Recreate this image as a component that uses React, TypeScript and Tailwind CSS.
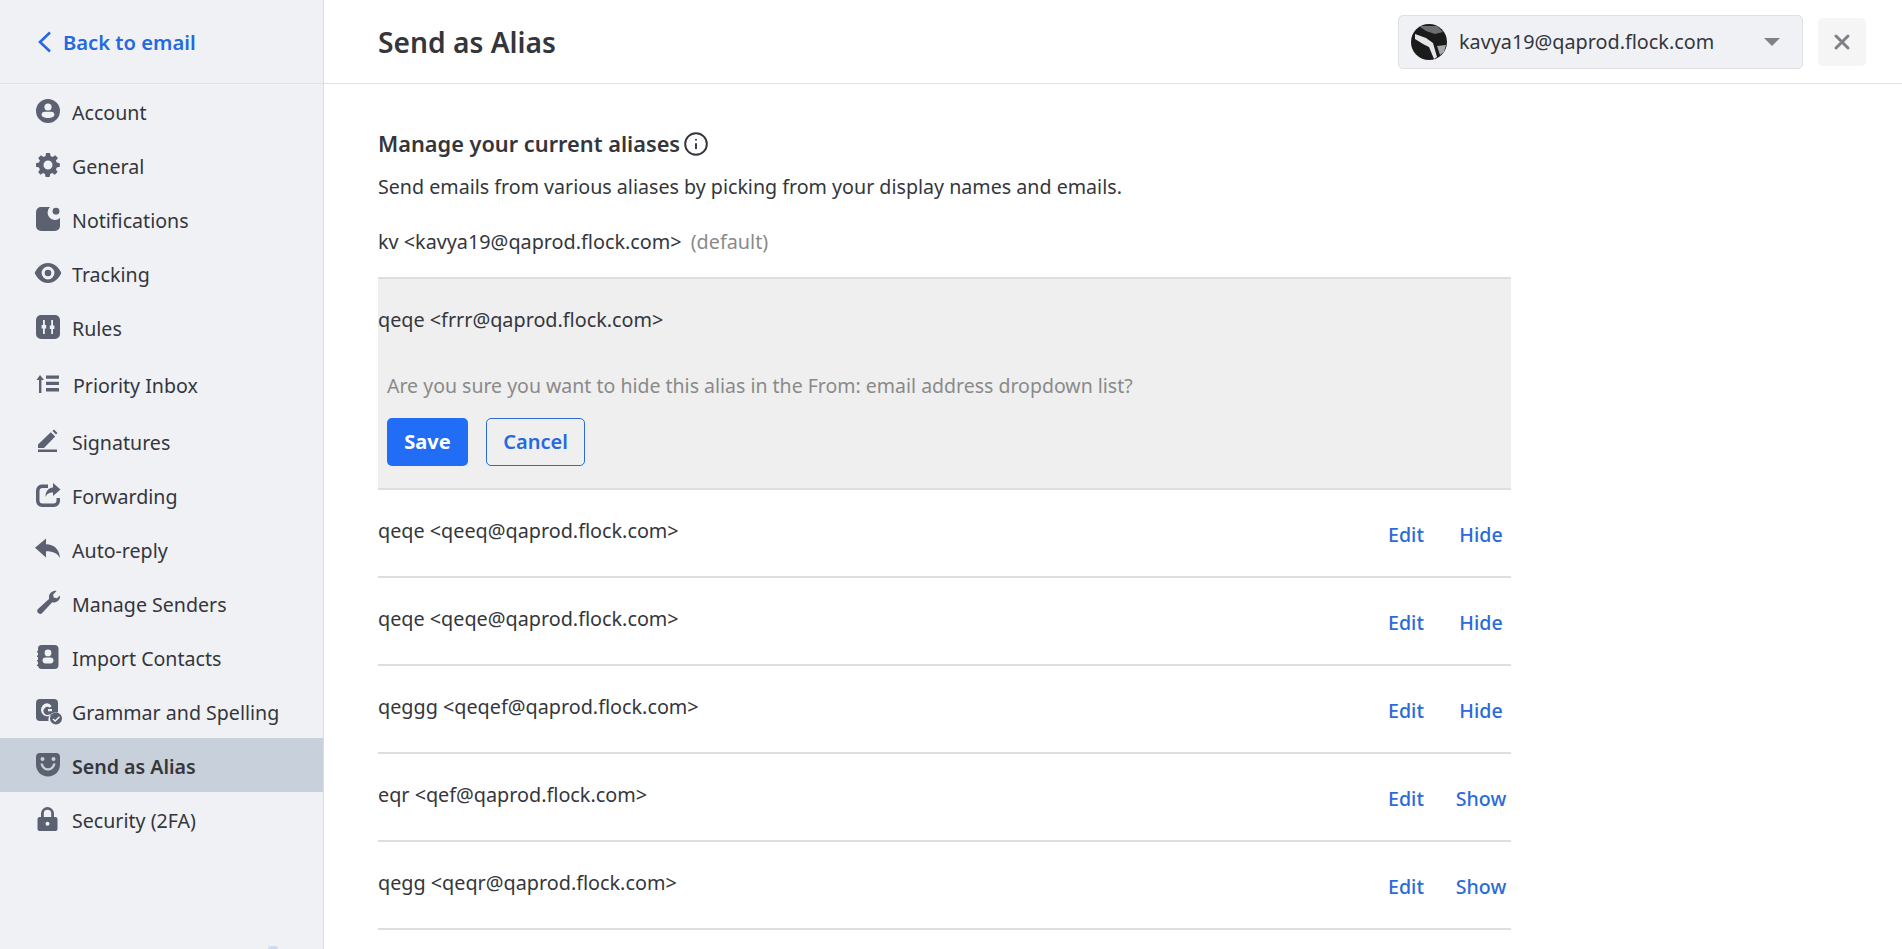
import { Info, X } from "lucide-react";
import type { ReactNode } from "react";

const FONT = "font-['Noto_Sans','Open_Sans',sans-serif]";

// Settings nav icons, all drawn on a 24 box in the slate of the sidebar.
const icons: Record<string, ReactNode> = {
  account: (
    <path
      fillRule="evenodd"
      d="M12 0a12 12 0 1 1 0 24 12 12 0 0 1 0-24Zm0 4.400a3.600 3.600 0 1 0 0 7.200 3.600 3.600 0 0 0 0-7.200Zm-3.400 8.400c-1.700 0-3 1.300-3 2.900 0 1.900 2.800 3.300 6.400 3.300s6.400-1.400 6.400-3.300c0-1.600-1.300-2.900-3-2.900Z"
    />
  ),
  general: (
    <path
      fillRule="evenodd"
      d="M10 0h4l.6 3 2 .9 2.600-1.700 2.800 2.800L19.900 7.600l.9 2 3 .6v3.600l-3 .6-.9 2 1.700 2.600-2.800 2.800-2.600-1.700-2 .9-.6 3h-4l-.6-3-2-.9-2.600 1.700L2.200 19l1.700-2.600-.9-2-3-.6v-3.600l3-.6.9-2L2.200 5 5 2.200l2.600 1.700 2-.9ZM12 7.500a4.500 4.500 0 1 0 0 9 4.500 4.500 0 0 0 0-9Z"
    />
  ),
  notifications: (
    <>
      <path d="M5 0h9a6 6 0 0 0 10 11v8a5 5 0 0 1-5 5H5a5 5 0 0 1-5-5V5a5 5 0 0 1 5-5Z" />
      <circle cx="20" cy="4.200" r="3.400" />
    </>
  ),
  tracking: (
    <path
      fillRule="evenodd"
      d="M12 2c6.400 0 11 4.800 13.300 10-2.300 5.200-6.900 10-13.300 10S1 17.200-1.300 12C1 6.800 5.600 2 12 2Zm0 3.600a6.400 6.400 0 1 0 0 12.800 6.400 6.400 0 0 0 0-12.800Zm0 3.100a3.300 3.300 0 1 1 0 6.600 3.300 3.300 0 0 1 0-6.600Z"
    />
  ),
  rules: (
    <path
      fillRule="evenodd"
      d="M5 0h14a5 5 0 0 1 5 5v14a5 5 0 0 1-5 5H5a5 5 0 0 1-5-5V5a5 5 0 0 1 5-5Zm2 5v5H5.600v3.500H7V19h1.800v-5.500h1.400V10H8.800V5Zm8.200 0v5.500h-1.400V14h1.400v5H17v-5h1.400v-3.500H17V5Z"
    />
  ),
  priority: (
    <path d="M4 3 .5 8H3v13h2.400V8H8ZM10 3.500h13v3.200H10Zm0 6.300h13v3.200H10Zm0 6.300h13v3.400H10Z" />
  ),
  signatures: (
    <path d="M18 .5 21.500 4 20 5.500 16.500 2ZM14.800 3.200 19.200 7.600 8 19H2v-3.500ZM2 20.500h19V23H2Z" />
  ),
  forwarding: (
    <path d="M5.500 1.500H12v3.600H6.500a3 3 0 0 0-3 3v9.400a3 3 0 0 0 3 3h11a3 3 0 0 0 3-3V15H24v3a6 6 0 0 1-6 6H6a6 6 0 0 1-6-6V7.500a6 6 0 0 1 5.500-6ZM17 0l7.500 6.500L17 13V9.500c-3.500 0-6 1-7.500 4.500 0-5.500 2.500-9 7.500-9.500Z" />
  ),
  reply: (
    <path d="M10 1.500V7.200c8 .3 13.300 4.500 14 13.800-2.500-4.700-6.500-6.800-14-6.800v6.300L-1 10.800Z" />
  ),
  senders: (
    <path d="M24 4.500c.6 3.800-2.800 8-7.800 6.700L6.200 22a2.700 2.700 0 0 1-4.200-.2 2.700 2.700 0 0 1 .3-4.100L13.200 7.800C11.900 3.100 16.200-1 20.600 0l-3.500 3.500.6 3.100 3.100.7Z" />
  ),
  contacts: (
    <path
      fillRule="evenodd"
      d="M5.500 0h13a4 4 0 0 1 4 4v16a4 4 0 0 1-4 4h-13a3.500 3.500 0 0 1-3.400-3H1v-1.500h1v-3H1V15h1v-3H1v-1.500h1v-3H1V6h1V3.500A3.500 3.500 0 0 1 5.500 0Zm6.500 4.500a3.400 3.400 0 1 0 0 6.800 3.400 3.400 0 0 0 0-6.800ZM9.500 12.500c-1.800 0-3 1.200-3 2.800 0 1.700 1.100 3.200 2.900 3.200h5.200c1.800 0 2.900-1.500 2.900-3.200 0-1.600-1.200-2.800-3-2.800Z"
    />
  ),
  grammar: (
    <>
      <path
        fillRule="evenodd"
        d="M4 0h14a4 4 0 0 1 4 4v9.500a7.500 7.500 0 0 0-9.500 8.500H4a4 4 0 0 1-4-4V4a4 4 0 0 1 4-4Zm7.500 4.300a6.500 6.500 0 1 0 4.700 11h-2.500a4 4 0 1 1 .2-6.600l1.700-1.700a6.500 6.500 0 0 0-4.100-2.700Zm.5 5.700v2.300h4v-2.300Z"
      />
      <path
        fillRule="evenodd"
        d="M20 13.500a6 6 0 1 1 0 12 6 6 0 0 1 0-12Zm3 3.800-3.800 3.600-1.700-1.500-1 1 2.700 2.500 4.800-4.600Z"
      />
    </>
  ),
  alias: (
    <path
      fillRule="evenodd"
      d="M4 0h16a4 4 0 0 1 4 4v7.500C24 18.500 18.500 23.500 12 23.500S0 18.500 0 11.500V4a4 4 0 0 1 4-4Zm2.500 4a2 2 0 1 0 0 4 2 2 0 0 0 0-4Zm11 0a2 2 0 1 0 0 4 2 2 0 0 0 0-4ZM4.500 10.500c.6 4.300 3.700 7 7.500 7s6.900-2.700 7.500-7h-2.400c-.5 3-2.500 4.700-5.100 4.700S7.400 13.500 6.900 10.500Z"
    />
  ),
  security: (
    <path
      fillRule="evenodd"
      d="M11.500 0A6.500 6.500 0 0 1 18 6.500V10h1.500a2 2 0 0 1 2 2v10a2 2 0 0 1-2 2h-16a2 2 0 0 1-2-2V12a2 2 0 0 1 2-2H5V6.500A6.500 6.500 0 0 1 11.500 0Zm0 2.800a3.700 3.700 0 0 0-3.700 3.700V10h7.400V6.500a3.700 3.700 0 0 0-3.700-3.700Zm0 12a2 2 0 1 0 0 4 2 2 0 0 0 0-4Z"
    />
  ),
};

type NavItem = { label: string; icon: string; tall?: boolean; active?: boolean };

const nav: NavItem[] = [
  { label: "Account", icon: "account" },
  { label: "General", icon: "general" },
  { label: "Notifications", icon: "notifications" },
  { label: "Tracking", icon: "tracking" },
  { label: "Rules", icon: "rules" },
  { label: "Priority Inbox", icon: "priority", tall: true },
  { label: "Signatures", icon: "signatures" },
  { label: "Forwarding", icon: "forwarding" },
  { label: "Auto-reply", icon: "reply" },
  { label: "Manage Senders", icon: "senders" },
  { label: "Import Contacts", icon: "contacts" },
  { label: "Grammar and Spelling", icon: "grammar" },
  { label: "Send as Alias", icon: "alias", active: true },
  { label: "Security (2FA)", icon: "security" },
];

const aliases = [
  { text: "qeqe <qeeq@qaprod.flock.com>", action: "Hide" },
  { text: "qeqe <qeqe@qaprod.flock.com>", action: "Hide" },
  { text: "qeggg <qeqef@qaprod.flock.com>", action: "Hide" },
  { text: "eqr <qef@qaprod.flock.com>", action: "Show" },
  { text: "qegg <qeqr@qaprod.flock.com>", action: "Show" },
];

function Sidebar() {
  return (
    <aside className="relative flex w-[324px] shrink-0 flex-col border-r border-[#dcdde1] bg-[#f0f1f5]">
      <div className="flex h-[84px] items-center gap-[12px] border-b border-[#e0e1e4] pl-[38px]">
        <svg viewBox="0 0 13 22" className="h-[22px] w-[13px] fill-none stroke-[#2569e0] stroke-[2.600]">
          <path d="M12 1.500 2 11l10 9.500" />
        </svg>
        <span className="pt-[2px] text-[20.2px] font-semibold text-[#2569e0]">Back to email</span>
      </div>
      <nav>
        {nav.map((item) => (
          <div
            key={item.label}
            className={`flex items-center pl-[36px] text-[19.6px] ${item.tall ? "h-[60px]" : "h-[54px]"} ${
              item.active ? "bg-[#c7d0db] font-semibold" : ""
            } text-[#34363c]`}
          >
            <svg viewBox="0 0 24 24" className="h-[24px] w-[24px] shrink-0 overflow-visible fill-[#5b6170]">
              {icons[item.icon]}
            </svg>
            <span className={`pt-[3px] ${item.tall ? "ml-[13px]" : "ml-[12px]"}`}>{item.label}</span>
          </div>
        ))}
      </nav>
      <div className="absolute bottom-0 left-[268px] h-[3px] w-[10px] rounded-t-sm bg-[#cddcf3]" />
    </aside>
  );
}

function AliasRow({ text, action }: { text: string; action: string }) {
  return (
    <div className="flex h-[88px] justify-between border-b-2 border-[#dedede] pt-[26px]">
      <span className="text-[19.8px] text-[#34363c]">{text}</span>
      <div className="mt-[4px] flex h-fit gap-[15px] text-[19.6px] font-medium text-[#2a6bd8]">
        <span className="w-[60px] text-center">Edit</span>
        <span className="w-[60px] text-center">{action}</span>
      </div>
    </div>
  );
}

export default function App() {
  return (
    <div className={`flex h-[949px] w-[1902px] overflow-hidden bg-white ${FONT}`}>
      <Sidebar />
      <main className="min-w-0 flex-1">
        <header className="flex h-[84px] items-center justify-between border-b border-[#e0e1e4] pl-[54px] pr-[36px]">
          <h1 className="pt-[2px] text-[28.2px] font-semibold text-[#34363c]">Send as Alias</h1>
          <div className="flex items-center gap-[15px]">
            <div className="flex h-[54px] w-[405px] items-center rounded-[5px] border border-[#dfe0e4] bg-[#f0f1f5] pl-[12px] pr-[22px]">
              <svg viewBox="0 0 36 36" className="h-[36px] w-[36px] shrink-0">
                <circle cx="18" cy="18" r="18" fill="#1b1b1b" />
                <path d="M8 2h18l6 6-8 2-9-3Z" fill="#6e6e6e" />
                <path d="M4 10 15 14l7 5 4 14-3 2-5-12-6-3-8-5Z" fill="#e6e6e6" />
                <path d="M26 22l9-1-2 7-4 3Z" fill="#a8a8a8" />
              </svg>
              <span className="ml-[12px] flex-1 text-[19.8px] text-[#34363c]">kavya19@qaprod.flock.com</span>
              <div className="h-0 w-0 border-x-[8px] border-t-[8px] border-x-transparent border-t-[#808186]" />
            </div>
            <button className="flex h-[48px] w-[48px] items-center justify-center rounded-[5px] bg-[#f5f5f6]">
              <X className="h-[24px] w-[24px] text-[#808186]" strokeWidth={3} />
            </button>
          </div>
        </header>
        <section className="ml-[54px] w-[1133px] pt-[44px]">
          <div className="flex items-center gap-[3px]">
            <h2 className="text-[21.75px] font-semibold text-[#34363c]">Manage your current aliases</h2>
            <Info className="h-[26px] w-[26px] text-[#34363c]" strokeWidth={1.8} />
          </div>
          <p className="mt-[11px] text-[19.65px] text-[#34363c]">
            Send emails from various aliases by picking from your display names and emails.
          </p>
          <p className="mt-[26px] text-[19.8px] text-[#34363c]">
            kv &lt;kavya19@qaprod.flock.com&gt; <span className="ml-[4px] text-[#8a8a8a]">(default)</span>
          </p>
          <div className="mt-[20px] h-[213px] border-y-2 border-[#dedede] bg-[#efefef]">
            <p className="pt-[26px] text-[19.8px] text-[#34363c]">qeqe &lt;frrr@qaprod.flock.com&gt;</p>
            <p className="mt-[37px] pl-[9px] text-[19.5px] text-[#8a8a8a]">
              Are you sure you want to hide this alias in the From: email address dropdown list?
            </p>
            <div className="ml-[9px] mt-[17px] flex gap-[18px]">
              <button className="h-[48px] w-[81px] rounded-[5px] bg-[#216df5] text-[20px] font-bold text-white">Save</button>
              <button className="h-[48px] w-[99px] rounded-[5px] border border-[#2a6bd8] text-[20px] font-semibold text-[#2569e0]">Cancel</button>
            </div>
          </div>
          {aliases.map((a) => (
            <AliasRow key={a.text} text={a.text} action={a.action} />
          ))}
        </section>
      </main>
    </div>
  );
}
